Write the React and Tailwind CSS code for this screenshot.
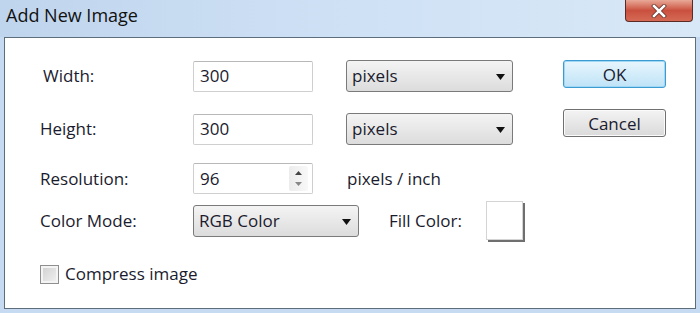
import React from "react";

const font = { fontFamily: '"Open Sans", "Noto Sans", sans-serif' };

function Select({ value, width }) {
  return (
    <div
      className={`relative flex h-[32px] items-center rounded-[3px] border border-[#7a7a7a] bg-gradient-to-b from-[#f4f4f4] to-[#dcdcdc] pl-[5px] text-[17px] text-[#1b1b2e] ${width}`}
    >
      <span>{value}</span>
      <svg className="absolute right-[7px] top-[13px]" width="9" height="6" viewBox="0 0 9 6">
        <path d="M0 0 H9 L4.5 6 Z" fill="#111" />
      </svg>
    </div>
  );
}

function TextBox({ value, children }) {
  return (
    <div className="relative flex h-[31px] w-[120px] items-center rounded-[2px] border border-[#cfcfcf] border-t-[#b8b8b8] bg-white pl-[6px] text-[17px] text-[#1b1b2e]">
      {value}
      {children}
    </div>
  );
}

function Label({ children, cls = "" }) {
  return <div className={`w-[153px] text-[17px] text-[#1b1b2e] ${cls}`}>{children}</div>;
}

export default function App() {
  return (
    <div className="flex h-[313px] w-[700px] flex-col bg-[#c6dbf1]" style={font}>
      {/* title bar */}
      <div className="relative flex h-[37px] shrink-0 bg-gradient-to-r from-[#bfd5ed] via-[#cfe1f5] to-[#d8e8f7]">
        <div className="pl-[6px] pt-[2px] text-[18px] text-[#111]">Add New Image</div>
        <div className="absolute left-[625px] top-0 flex h-[22px] w-[68px] items-center justify-center rounded-b-[4px] border border-t-0 border-[#5b2a24] bg-gradient-to-b from-[#e8a898] via-[#c9503e] to-[#d56a55]">
          <svg width="16" height="14" viewBox="0 0 16 14">
            <path d="M3 2 L13 12 M13 2 L3 12" stroke="#5a2a22" strokeWidth="4" strokeLinecap="square" />
            <path d="M3 2 L13 12 M13 2 L3 12" stroke="#ffffff" strokeWidth="2.6" strokeLinecap="square" />
          </svg>
        </div>
      </div>
      {/* client area */}
      <div className="ml-[4px] mr-[4px] flex h-[272px] flex-col border-[1.5px] border-[#5e6d7c] bg-white pl-[35px] pt-[22px]">
        {/* row 1 */}
        <div className="flex h-[32px] items-center">
          <Label cls="pl-[3px]">Width:</Label>
          <TextBox value="300" />
          <div className="w-[33px]" />
          <Select value="pixels" width="w-[167px]" />
          <div className="w-[50px]" />
          <button className="h-[28px] w-[103px] self-start rounded-[3px] border border-[#3c9cd2] bg-gradient-to-b from-[#e8f6fd] to-[#bfe3f7] text-[17px] leading-none text-[#1b1b2e] shadow-[inset_0_0_0_1px_#9fd7f5]">
            OK
          </button>
        </div>
        {/* row 2 */}
        <div className="mt-[21px] flex h-[32px] items-center">
          <Label>Height:</Label>
          <TextBox value="300" />
          <div className="w-[33px]" />
          <Select value="pixels" width="w-[167px]" />
          <div className="w-[50px]" />
          <button className="-mt-[4px] h-[28px] w-[103px] self-start rounded-[3px] border border-[#707070] bg-gradient-to-b from-[#f3f3f3] to-[#dadada] text-[17px] leading-none text-[#1b1b2e] shadow-[inset_0_0_0_1px_#fbfbfb]">
            Cancel
          </button>
        </div>
        {/* row 3 */}
        <div className="mt-[18px] flex h-[31px] items-center">
          <Label>Resolution:</Label>
          <TextBox value="96">
            <div className="absolute right-[4px] top-[2px] flex h-[25px] w-[19px] flex-col items-center justify-between rounded-[2px] bg-gradient-to-r from-[#ececec] to-[#f8f8f8] py-[5px]">
              <svg width="7" height="4" viewBox="0 0 7 4">
                <path d="M0 4 L3.5 0 L7 4 Z" fill="#444" />
              </svg>
              <svg width="7" height="4" viewBox="0 0 7 4">
                <path d="M0 0 H7 L3.5 4 Z" fill="#888" />
              </svg>
            </div>
          </TextBox>
          <div className="w-[34px]" />
          <div className="text-[17px] text-[#1b1b2e]">pixels / inch</div>
        </div>
        {/* row 4 */}
        <div className="mt-[7px] flex h-[39px] items-center">
          <Label>Color Mode:</Label>
          <Select value="RGB Color" width="w-[166px]" />
          <div className="w-[30px]" />
          <div className="w-[97px] text-[17px] text-[#1b1b2e]">Fill Color:</div>
          <div className="h-[39px] w-[37px] border border-[#d4d4d4] bg-white shadow-[2px_2px_0_0_#6f6f6f]" />
        </div>
        {/* row 5 */}
        <div className="mt-[24px] flex h-[20px] items-center">
          <div className="h-[19px] w-[19px] border border-[#8f8f8f] bg-gradient-to-br from-[#cfcfcf] to-[#f3f3f3] shadow-[inset_0_0_0_2px_#f4f4f4]" />
          <div className="ml-[6px] text-[17px] text-[#1b1b2e]">Compress image</div>
        </div>
      </div>
    </div>
  );
}
